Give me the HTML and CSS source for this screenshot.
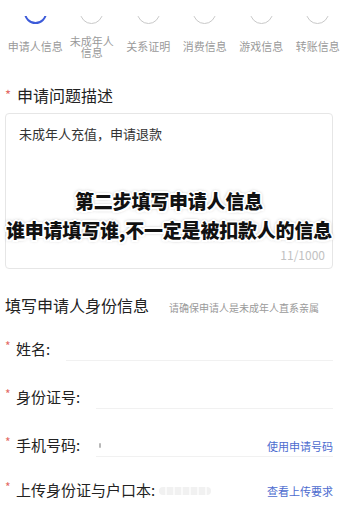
FILE: index.html
```html
<!DOCTYPE html>
<html lang="zh">
<head>
<meta charset="utf-8">
<link rel="stylesheet" href="styles.css">
</head>
<body>
<div class="page">
  <div class="steps">
    <div class="step active">
      <div class="arc"><div class="ring"></div></div>
      <div class="step-label">申请人信息</div>
    </div>
    <div class="step">
      <div class="arc"><div class="ring"></div></div>
      <div class="step-label">未成年人<br>信息</div>
    </div>
    <div class="step">
      <div class="arc"><div class="ring"></div></div>
      <div class="step-label">关系证明</div>
    </div>
    <div class="step">
      <div class="arc"><div class="ring"></div></div>
      <div class="step-label">消费信息</div>
    </div>
    <div class="step">
      <div class="arc"><div class="ring"></div></div>
      <div class="step-label">游戏信息</div>
    </div>
    <div class="step">
      <div class="arc"><div class="ring"></div></div>
      <div class="step-label">转账信息</div>
    </div>
  </div>

  <div class="section-title"><span class="star">*</span>申请问题描述</div>
  <div class="textbox">
    <div class="textbox-text">未成年人充值，申请退款</div>
    <div class="counter">11/1000</div>
    <div class="overlay">
      <div>第二步填写申请人信息</div>
      <div>谁申请填写谁,不一定是被扣款人的信息</div>
    </div>
  </div>

  <div class="id-title">
    <span class="id-main">填写申请人身份信息</span>
    <span class="id-hint">请确保申请人是未成年人直系亲属</span>
  </div>

  <div class="row">
    <span class="star sm">*</span><span class="label">姓名:</span>
    <div class="input"></div>
  </div>
  <div class="row">
    <span class="star sm">*</span><span class="label">身份证号:</span>
    <div class="input"></div>
  </div>
  <div class="row">
    <span class="star sm">*</span><span class="label">手机号码:</span>
    <div class="input"><span class="mask"></span><span class="link">使用申请号码</span></div>
  </div>
  <div class="row last">
    <span class="star sm">*</span><span class="label">上传身份证与户口本:</span>
    <div class="input plain"><span class="dots"></span><span class="link">查看上传要求</span></div>
  </div>
</div>
</body>
</html>
```

FILE: styles.css
```css
* { box-sizing: border-box; }
html, body { margin: 0; padding: 0; background: #fff; }
body {
  font-family: "Noto Sans CJK SC", "Noto Sans", sans-serif;
  color: #222;
  width: 353px;
  overflow: hidden;
}
.page { width: 353px; }

.steps {
  display: flex;
  padding: 0 7px;
  height: 59px;
}
.step {
  flex: 1;
  display: flex;
  flex-direction: column;
  align-items: center;
}
.arc {
  margin-top: 16px;
  width: 26px;
  height: 8px;
  overflow: hidden;
  display: flex;
  justify-content: center;
}
.ring {
  flex: none;
  width: 23px;
  height: 23px;
  margin-top: -15px;
  border-radius: 50%;
  border: 1px solid #c8c8c8;
}
.step.active .ring {
  border: 2.5px solid #3d5bd9;
}
.step-label {
  margin-top: 11px;
  height: 24px;
  display: flex;
  align-items: center;
  text-align: center;
  font-size: 11px;
  line-height: 11.5px;
  color: #9a9a9a;
}

.section-title {
  margin-top: 24px;
  padding-left: 5px;
  font-size: 16px;
  line-height: 24px;
  color: #222;
  display: flex;
  align-items: center;
}
.star {
  color: #e36a66;
  font-size: 13px;
  width: 12px;
  line-height: 1;
  align-self: flex-start;
  margin-top: 5px;
}
.textbox {
  position: relative;
  margin: 6px 20px 0 5px;
  height: 156px;
  border: 1px solid #e6e6e6;
  border-radius: 4px;
  padding: 11px 7px 4px 13px;
  display: flex;
  flex-direction: column;
}
.textbox-text {
  font-size: 13px;
  line-height: 18px;
  color: #333;
}
.counter {
  margin-top: auto;
  align-self: flex-end;
  font-size: 12px;
  line-height: 18px;
  color: #c2c2c2;
}
.overlay {
  position: absolute;
  left: -20px;
  right: -20px;
  top: 72px;
  text-align: center;
  white-space: nowrap;
  font-size: 19px;
  line-height: 29px;
  font-weight: 900;
  color: #111;
  letter-spacing: -0.2px;
  text-shadow:
    -1.5px -1.5px 0 #fff, 1.5px -1.5px 0 #fff, -1.5px 1.5px 0 #fff, 1.5px 1.5px 0 #fff,
    0 -2px 0 #fff, 0 2px 0 #fff, -2px 0 0 #fff, 2px 0 0 #fff,
    0 0 3px #777, 0 0 4px #999;
}

.id-title {
  margin-top: 24px;
  padding-left: 5px;
  height: 24px;
  display: flex;
  align-items: baseline;
}
.id-main { font-size: 16px; line-height: 24px; color: #222; }
.id-hint { margin-left: 20px; font-size: 10px; color: #9a9a9a; }

.row {
  display: flex;
  align-items: center;
  height: 48px;
  padding-left: 5px;
}
.id-title + .row { margin-top: 8px; }
.row.last { height: 42px; }
.star.sm {
  font-size: 12px;
  width: 11px;
  align-self: center;
  margin-top: -6px;
}
.label { font-size: 15px; color: #222; line-height: 20px; }
.input {
  flex: 1;
  height: 24px;
  margin: 0 20px 0 16px;
  border-bottom: 1px solid #f1f1f1;
  display: flex;
  align-items: center;
  justify-content: space-between;
  padding-top: 2px;
}
.input.plain { border-bottom: none; margin-left: 4px; }
.mask {
  width: 2px; height: 5px; background: #b8b8b8; border-radius: 1px; margin-left: 3px;
}
.dots {
  width: 52px; height: 8px; border-radius: 4px;
  background: repeating-linear-gradient(90deg, #f1f1f1 0 6px, #fafafa 6px 8px);
}
.link { font-size: 11px; color: #4d6ccf; }
```
